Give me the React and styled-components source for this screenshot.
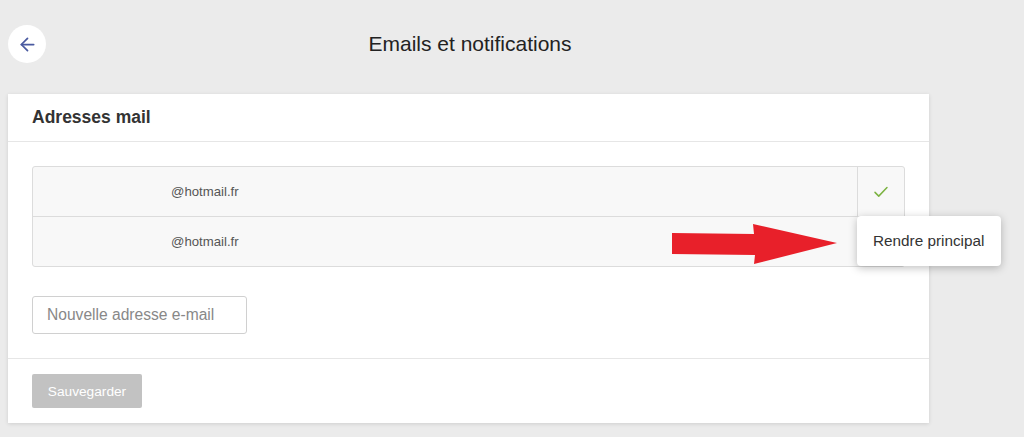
import React from "react";
import styled, { createGlobalStyle } from "styled-components";

const GlobalStyle = createGlobalStyle`
  html, body {
    margin: 0;
    padding: 0;
    background: #ebebeb;
    font-family: "Liberation Sans", Arial, sans-serif;
  }
`;

const Page = styled.div`
  width: 1024px;
  height: 437px;
  position: relative;
  overflow: hidden;
  background: #ebebeb;
`;

const TopBar = styled.div`
  height: 94px;
  display: flex;
  align-items: center;
  padding: 0 8px;
  box-sizing: border-box;
  position: relative;
  top: -3px;
`;

const BackButton = styled.button`
  width: 38px;
  height: 38px;
  border-radius: 50%;
  border: none;
  background: #fff;
  display: flex;
  align-items: center;
  justify-content: center;
  padding: 0;
  cursor: pointer;
`;

const Title = styled.h1`
  flex: 1;
  margin: 0;
  text-align: center;
  font-size: 21px;
  font-weight: normal;
  color: #222;
  padding-right: 122px;
`;

const Card = styled.div`
  width: 921px;
  margin-left: 8px;
  height: 329px;
  background: #fff;
  box-shadow: 0 1px 4px rgba(0, 0, 0, 0.12);
  display: flex;
  flex-direction: column;
`;

const CardHeader = styled.div`
  height: 47px;
  border-bottom: 1px solid #e6e6e6;
  padding: 0 24px;
  display: flex;
  align-items: center;
  font-size: 17.5px;
  font-weight: bold;
  color: #333;
`;

const CardBody = styled.div`
  padding: 24px 24px 24px;
  border-bottom: 1px solid #e6e6e6;
`;

const List = styled.div`
  width: 871px;
  border: 1px solid #dcdcdc;
  border-radius: 3px;
  background: #f8f8f8;
`;

const Row = styled.div`
  height: 49px;
  display: flex;
  align-items: center;
  border-top: ${(p) => (p.first ? "none" : "1px solid #dcdcdc")};
`;

const Email = styled.div`
  flex: 1;
  padding-left: 138px;
  font-size: 13.2px;
  color: #555;
`;

const CheckCell = styled.div`
  width: 46px;
  height: 100%;
  border-left: 1px solid #dcdcdc;
  display: flex;
  align-items: center;
  justify-content: center;
`;

const Input = styled.input`
  margin-top: 29px;
  width: 215px;
  height: 38px;
  box-sizing: border-box;
  border: 1px solid #d0d0d0;
  border-radius: 3px;
  padding: 0 14px;
  font-size: 15.6px;
  font-family: "Liberation Sans", Arial, sans-serif;
  &::placeholder {
    color: #888;
  }
`;

const CardFooter = styled.div`
  padding: 15px 24px;
`;

const SaveButton = styled.button`
  width: 110px;
  height: 34px;
  border: none;
  border-radius: 2px;
  background: #c2c2c2;
  color: #fff;
  font-size: 13.7px;
  font-family: "Liberation Sans", Arial, sans-serif;
`;

const Popup = styled.div`
  position: absolute;
  left: 857px;
  top: 216px;
  width: 144px;
  height: 50px;
  background: #fff;
  border-radius: 4px;
  box-shadow: 0 2px 8px rgba(0, 0, 0, 0.25);
  display: flex;
  align-items: center;
  padding-left: 16px;
  box-sizing: border-box;
  font-size: 15.3px;
  color: #333;
`;

const Arrow = styled.svg`
  position: absolute;
  left: 670px;
  top: 222px;
`;

export default function App() {
  return (
    <Page>
      <GlobalStyle />
      <TopBar>
        <BackButton>
          <svg width="21" height="21" viewBox="0 0 24 24" fill="none" stroke="#4a5aa0" strokeWidth="2" strokeLinecap="round" strokeLinejoin="round">
            <path d="M19 12H5" />
            <path d="M12 19l-7-7 7-7" />
          </svg>
        </BackButton>
        <Title>Emails et notifications</Title>
      </TopBar>
      <Card>
        <CardHeader>Adresses mail</CardHeader>
        <CardBody>
          <List>
            <Row first>
              <Email>@hotmail.fr</Email>
              <CheckCell>
                <svg width="18" height="18" viewBox="0 0 24 24" fill="none" stroke="#7cb342" strokeWidth="2" strokeLinecap="round" strokeLinejoin="round">
                  <path d="M4 12.5l5 5L20 6" />
                </svg>
              </CheckCell>
            </Row>
            <Row>
              <Email>@hotmail.fr</Email>
            </Row>
          </List>
          <Input placeholder="Nouvelle adresse e-mail" />
        </CardBody>
        <CardFooter>
          <SaveButton>Sauvegarder</SaveButton>
        </CardFooter>
      </Card>
      <Arrow width="170" height="46" viewBox="0 0 170 46">
        <polygon points="2,11 84,12 83,2 167,21 84,42 85,33 2,32" fill="#e8202a" />
      </Arrow>
      <Popup>Rendre principal</Popup>
    </Page>
  );
}
